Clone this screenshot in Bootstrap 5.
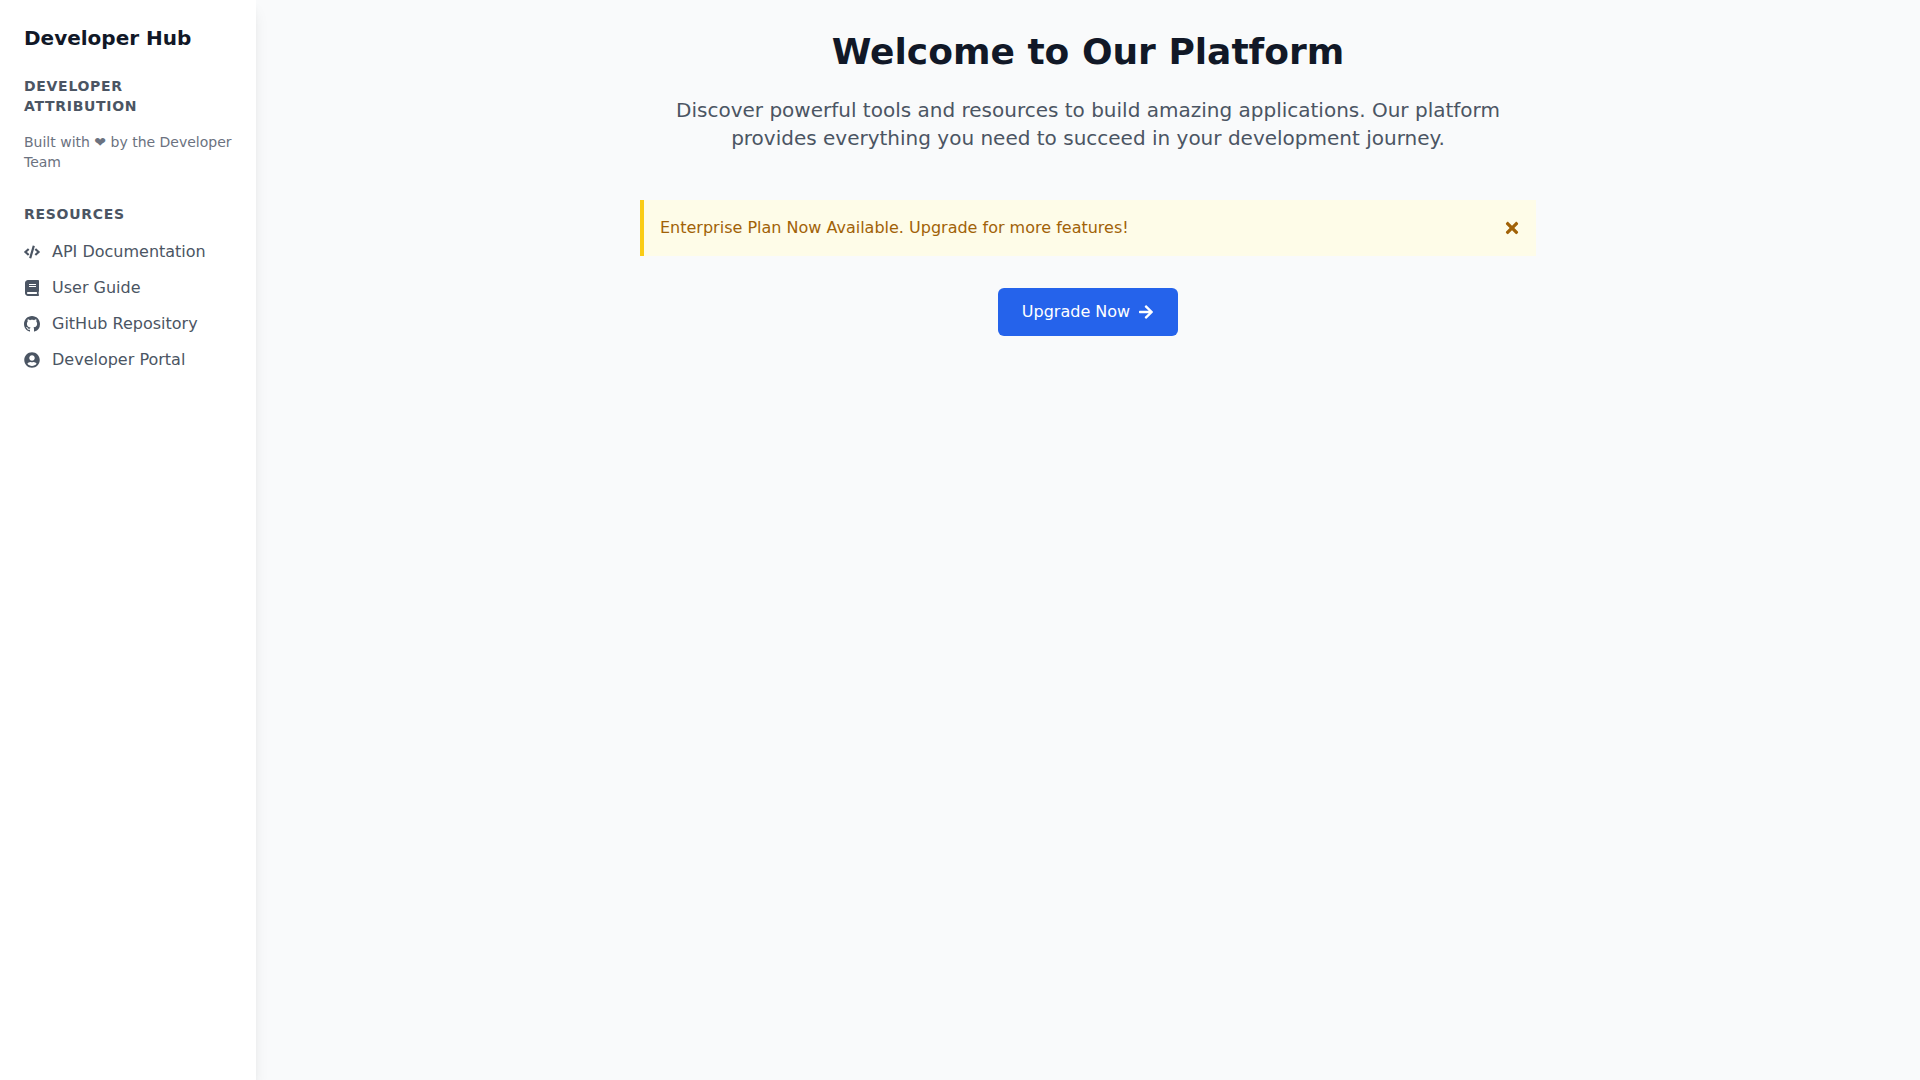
<!DOCTYPE html>
<html lang="en">
<head>
    <meta charset="UTF-8">
    <meta name="viewport" content="width=device-width, initial-scale=1">
    <title>Developer Hub</title>
    <link href="https://cdn.jsdelivr.net/npm/bootstrap@5.3.0/dist/css/bootstrap.min.css" rel="stylesheet">
    <style>
        body {
            font-family: "DejaVu Sans", sans-serif;
            background: #f9fafb;
            color: #111827;
        }

        .side-panel {
            width: 256px;
            flex-shrink: 0;
            padding: 24px;
            background: #fff;
            box-shadow: 0 10px 15px -3px rgba(0, 0, 0, 0.1), 0 4px 6px -2px rgba(0, 0, 0, 0.05);
        }

        .side-brand {
            font-size: 20px;
            line-height: 28px;
            font-weight: 700;
            color: #111827;
            margin-bottom: 24px;
        }

        .side-heading {
            font-size: 14px;
            line-height: 20px;
            font-weight: 700;
            letter-spacing: 0.7px;
            text-transform: uppercase;
            color: #4b5563;
            margin-bottom: 16px;
        }

        .side-note {
            font-size: 14px;
            line-height: 20px;
            color: #6b7280;
            margin-bottom: 32px;
        }

        .side-link {
            display: flex;
            align-items: center;
            gap: 12px;
            height: 24px;
            margin-bottom: 12px;
            font-size: 16px;
            color: #4b5563;
            text-decoration: none;
        }

        .side-link svg {
            width: 16px;
            height: 16px;
            flex-shrink: 0;
            fill: currentColor;
        }

        .main-area {
            flex-grow: 1;
            padding: 32px;
        }

        .main-inner {
            max-width: 896px;
            margin: 0 auto;
        }

        .hero-title {
            font-size: 36px;
            line-height: 40px;
            font-weight: 700;
            color: #111827;
            margin-bottom: 24px;
        }

        .hero-text {
            font-size: 20px;
            line-height: 28px;
            color: #4b5563;
            max-width: 848px;
            margin: 0 auto 48px;
        }

        .notice-box {
            height: 56px;
            padding: 0 16px;
            background: #fefce8;
            border-left: 4px solid #facc15;
            color: #a16207;
            font-size: 16px;
            margin-bottom: 32px;
        }

        .notice-close {
            width: 16px;
            height: 18px;
            padding: 0;
            border: 0;
            background: none;
            color: #a16207;
            line-height: 0;
        }

        .notice-close svg {
            width: 16px;
            height: 18px;
            fill: currentColor;
        }

        .upgrade-btn {
            padding: 12px 24px;
            font-size: 16px;
            line-height: 24px;
            color: #fff;
            background: #2563eb;
            border: 0;
            border-radius: 6px;
        }

        .upgrade-btn svg {
            width: 16px;
            height: 16px;
            fill: currentColor;
        }
    </style>
</head>
<body>

<div class="d-flex min-vh-100">
    <aside class="side-panel">
        <div class="side-brand">Developer Hub</div>
        <div class="side-heading">Developer Attribution</div>
        <p class="side-note">Built with ❤ by the Developer Team</p>
        <div class="side-heading">Resources</div>
        <a class="side-link" href="#">
            <svg viewBox="0 0 640 512"><path d="M278.9 511.5l-61-17.7c-6.4-1.8-10-8.5-8.2-14.9L346.2 8.7c1.8-6.4 8.5-10 14.9-8.2l61 17.7c6.4 1.8 10 8.5 8.2 14.9L293.8 503.3c-1.9 6.4-8.5 10.1-14.9 8.2zm-114-112.2l43.5-46.4c4.6-4.9 4.3-12.7-.8-17.2L117 256l90.6-79.7c5.1-4.5 5.5-12.3.8-17.2l-43.5-46.4c-4.5-4.8-12.1-5.1-17-.5L3.8 247.2c-5.1 4.7-5.1 12.8 0 17.5l144.1 135.1c4.9 4.6 12.5 4.4 17-.5zm327.2.6l144.1-135.1c5.1-4.7 5.1-12.8 0-17.5L492.1 112.1c-4.8-4.5-12.4-4.3-17 .5L431.6 159c-4.6 4.9-4.3 12.7.8 17.2L523 256l-90.6 79.7c-5.1 4.5-5.5 12.3-.8 17.2l43.5 46.4c4.5 4.9 12.1 5.1 17 .6z"/></svg>
            API Documentation
        </a>
        <a class="side-link" href="#">
            <svg viewBox="0 0 448 512"><path d="M448 360V24c0-13.3-10.7-24-24-24H96C43 0 0 43 0 96v320c0 53 43 96 96 96h328c13.3 0 24-10.7 24-24v-16c0-7.5-3.5-14.3-8.9-18.7-4.2-15.4-4.2-59.3 0-74.7 5.4-4.3 8.9-11.1 8.9-18.6zM128 134c0-3.3 2.7-6 6-6h212c3.3 0 6 2.7 6 6v20c0 3.3-2.7 6-6 6H134c-3.3 0-6-2.7-6-6v-20zm0 64c0-3.3 2.7-6 6-6h212c3.3 0 6 2.7 6 6v20c0 3.3-2.7 6-6 6H134c-3.3 0-6-2.7-6-6v-20zm253.4 250H96c-17.7 0-32-14.3-32-32 0-17.6 14.4-32 32-32h285.4c-1.9 17.1-1.9 46.9 0 64z"/></svg>
            User Guide
        </a>
        <a class="side-link" href="#">
            <svg viewBox="0 0 16 16"><path d="M8 0C3.58 0 0 3.58 0 8c0 3.54 2.29 6.53 5.47 7.59.4.07.55-.17.55-.38 0-.19-.01-.82-.01-1.49-2.01.37-2.53-.49-2.69-.94-.09-.23-.48-.94-.82-1.13-.28-.15-.68-.52-.01-.53.63-.01 1.08.58 1.23.82.72 1.21 1.87.87 2.33.66.07-.52.28-.87.51-1.07-1.78-.2-3.64-.89-3.64-3.95 0-.87.31-1.59.82-2.15-.08-.2-.36-1.02.08-2.12 0 0 .67-.21 2.2.82.64-.18 1.32-.27 2-.27.68 0 1.36.09 2 .27 1.53-1.04 2.2-.82 2.2-.82.44 1.1.16 1.92.08 2.12.51.56.82 1.27.82 2.15 0 3.07-1.87 3.75-3.65 3.95.29.25.54.73.54 1.48 0 1.07-.01 1.93-.01 2.2 0 .21.15.46.55.38A8.013 8.013 0 0016 8c0-4.42-3.58-8-8-8z"/></svg>
            GitHub Repository
        </a>
        <a class="side-link" href="#">
            <svg viewBox="0 0 496 512"><path d="M248 8C111 8 0 119 0 256s111 248 248 248 248-111 248-248S385 8 248 8zm0 96c48.6 0 88 39.4 88 88s-39.4 88-88 88-88-39.4-88-88 39.4-88 88-88zm0 344c-58.7 0-111.3-26.6-146.5-68.2 18.8-35.4 55.6-59.8 98.5-59.8 2.4 0 4.8.4 7.1 1.1 13 4.2 26.6 6.9 40.9 6.9 14.3 0 28-2.7 40.9-6.9 2.3-.7 4.7-1.1 7.1-1.1 42.9 0 79.7 24.4 98.5 59.8C359.3 421.4 306.7 448 248 448z"/></svg>
            Developer Portal
        </a>
    </aside>

    <main class="main-area">
        <div class="main-inner text-center">
            <h1 class="hero-title">Welcome to Our Platform</h1>
            <p class="hero-text">Discover powerful tools and resources to build amazing applications. Our platform provides everything you need to succeed in your development journey.</p>

            <div class="notice-box d-flex align-items-center justify-content-between text-start">
                <span>Enterprise Plan Now Available. Upgrade for more features!</span>
                <button class="notice-close" type="button" aria-label="Close">
                    <svg viewBox="0 0 352 512"><path d="M242.72 256l100.07-100.07c12.28-12.28 12.28-32.19 0-44.48l-22.24-22.24c-12.28-12.28-32.19-12.28-44.48 0L176 189.28 75.93 89.21c-12.28-12.28-32.19-12.28-44.48 0L9.21 111.45c-12.28 12.28-12.28 32.19 0 44.48L109.28 256 9.21 356.07c-12.28 12.28-12.28 32.19 0 44.48l22.24 22.24c12.28 12.28 32.2 12.28 44.48 0L176 322.72l100.07 100.07c12.28 12.28 32.2 12.28 44.48 0l22.24-22.24c12.28-12.28 12.28-32.19 0-44.48L242.72 256z"/></svg>
                </button>
            </div>

            <button class="upgrade-btn d-inline-flex align-items-center gap-2" type="button">
                Upgrade Now
                <svg viewBox="0 0 448 512"><path d="M190.5 66.9l22.2-22.2c9.4-9.4 24.6-9.4 33.9 0L441 239c9.4 9.4 9.4 24.6 0 33.9L246.6 467.3c-9.4 9.4-24.6 9.4-33.9 0l-22.2-22.2c-9.5-9.5-9.3-25 .4-34.3L311.4 296H24c-13.3 0-24-10.7-24-24v-32c0-13.3 10.7-24 24-24h287.4L190.9 101.2c-9.8-9.3-10-24.8-.4-34.3z"/></svg>
            </button>
        </div>
    </main>
</div>

<script src="https://cdn.jsdelivr.net/npm/bootstrap@5.3.0/dist/js/bootstrap.bundle.min.js"></script>
</body>
</html>
